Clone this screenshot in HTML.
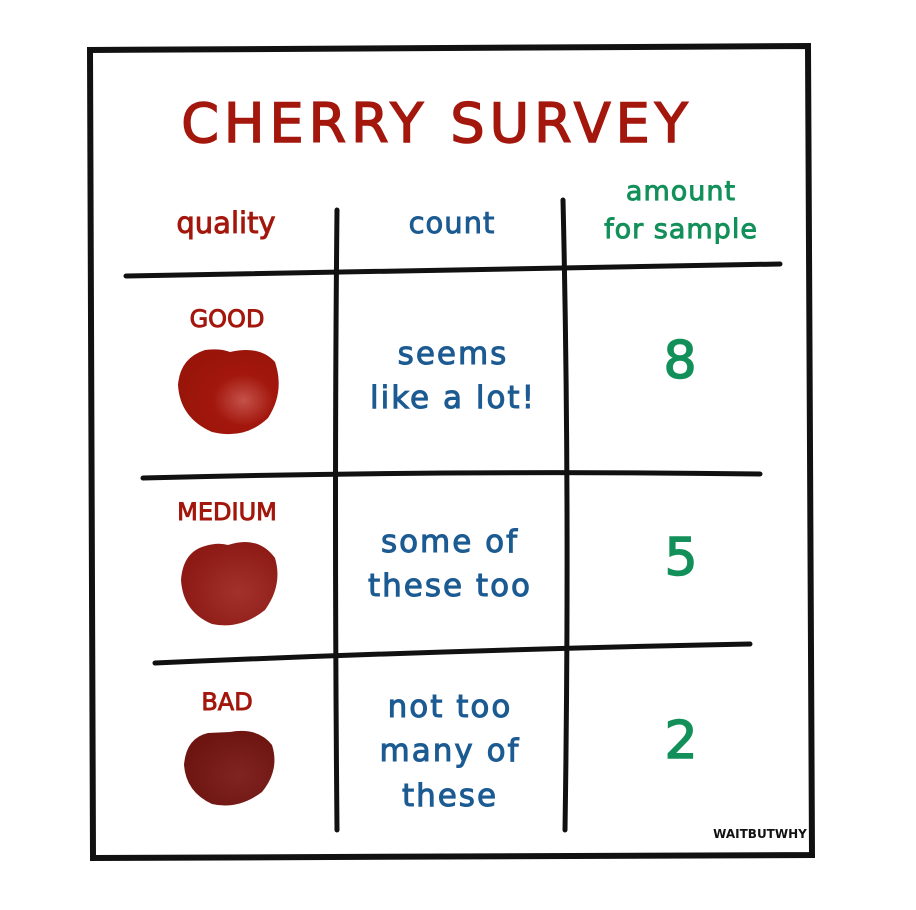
<!DOCTYPE html>
<html><head><meta charset="utf-8"><style>
body{margin:0;background:#fff;width:916px;height:905px;overflow:hidden}
svg text{font-family:"DejaVu Sans","Liberation Sans",sans-serif}
</style></head><body>
<svg width="916" height="905" viewBox="0 0 916 905">
<defs>
<radialGradient id="g1" cx="0.65" cy="0.6" r="0.6"><stop offset="0" stop-color="#c4524a"/><stop offset="0.5" stop-color="#a3170d"/><stop offset="1" stop-color="#9a1509"/></radialGradient>
<radialGradient id="g2" cx="0.6" cy="0.6" r="0.6"><stop offset="0" stop-color="#a2312c"/><stop offset="1" stop-color="#8d1a14"/></radialGradient>
<radialGradient id="g3" cx="0.6" cy="0.6" r="0.6"><stop offset="0" stop-color="#802420"/><stop offset="1" stop-color="#6e1511"/></radialGradient>
</defs>
<g fill="none" stroke="#111" stroke-width="5" stroke-linecap="round">
<path d="M90 50 L808 46 L812 855 L93 858 Z" stroke-width="6"/>
<path d="M126 276 Q400 270 780 264"/>
<path d="M143 478 Q450 470 760 474"/>
<path d="M155 663 Q450 650 750 644"/>
<path d="M337 210 Q334 500 337 830"/>
<path d="M563 200 Q570 500 565 830"/>
</g>
<text x="437" y="142" font-size="54" fill="#a3170d" stroke="#a3170d" stroke-width="1.5" text-anchor="middle" letter-spacing="5">CHERRY SURVEY</text>
<g stroke-width="0.9">
<text x="226" y="233" font-size="29" fill="#a3170d" stroke="#a3170d" text-anchor="middle">quality</text>
<text x="452" y="233" font-size="29" fill="#1c5a92" stroke="#1c5a92" text-anchor="middle" letter-spacing="1">count</text>
<text x="681" y="200" font-size="27" fill="#13905a" stroke="#13905a" text-anchor="middle" letter-spacing="1">amount</text>
<text x="681" y="238" font-size="27" fill="#13905a" stroke="#13905a" text-anchor="middle" letter-spacing="1">for sample</text>
<text x="227" y="327" font-size="24" fill="#a3170d" stroke="#a3170d" text-anchor="middle">GOOD</text>
<text x="227" y="520" font-size="24" fill="#a3170d" stroke="#a3170d" text-anchor="middle">MEDIUM</text>
<text x="227" y="710" font-size="24" fill="#a3170d" stroke="#a3170d" text-anchor="middle">BAD</text>
</g>
<path d="M230 352 Q260 345 275 362 Q285 392 268 418 Q245 440 212 432 Q180 418 178 385 Q180 358 205 350 Q220 348 230 352 Z" fill="url(#g1)"/>
<path d="M228 545 Q258 535 275 558 Q283 585 265 610 Q240 630 212 624 Q183 612 181 580 Q183 552 205 546 Q218 542 228 545 Z" fill="url(#g2)"/>
<path d="M230 732 Q258 727 272 745 Q280 770 262 792 Q238 810 212 804 Q186 792 184 765 Q186 738 208 733 Z" fill="url(#g3)"/>
<g font-size="31" fill="#1c5a92" stroke="#1c5a92" stroke-width="1" text-anchor="middle" letter-spacing="2">
<text x="453" y="364">seems</text><text x="453" y="408">like a lot!</text>
<text x="450" y="552">some of</text><text x="450" y="596">these too</text>
<text x="450" y="717">not too</text><text x="450" y="761">many of</text><text x="450" y="806">these</text>
</g>
<g font-size="52" fill="#13905a" stroke="#13905a" stroke-width="1.5" text-anchor="middle">
<text x="680" y="378">8</text><text x="681" y="575">5</text><text x="681" y="758">2</text>
</g>
<text x="760" y="838" font-size="12" font-weight="bold" fill="#111" text-anchor="middle">WAITBUTWHY</text>
</svg>
</body></html>
